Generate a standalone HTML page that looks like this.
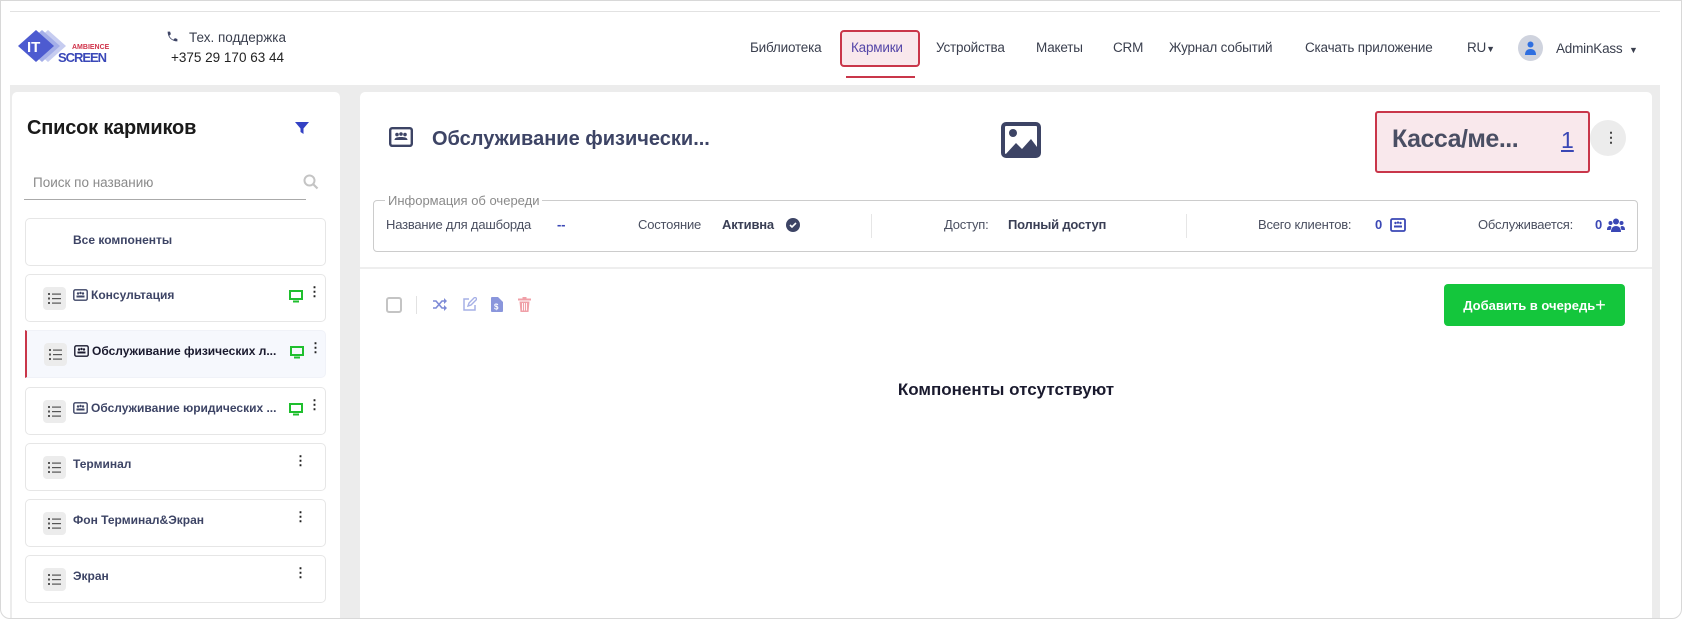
<!DOCTYPE html>
<html><head><meta charset="utf-8">
<style>
*{box-sizing:border-box;margin:0;padding:0}
body{width:1682px;height:619px;overflow:hidden;background:#fff;font-family:"Liberation Sans","Noto Sans CJK SC",sans-serif;position:relative;color:#3d4465}
.a{position:absolute}
.frame{left:0;top:0;width:1682px;height:619px;border:1px solid #d8d8d8;border-radius:0 0 10px 10px}
.nav{font-size:13.5px;color:#3a3f4e;top:40px;white-space:nowrap;letter-spacing:-.2px}
.item{left:25px;width:301px;height:48px;border:1px solid #e6e6e6;border-radius:5px;background:#fff}
.li{left:17px;top:12px;width:23px;height:23px;background:#ececec;border-radius:4px}
.it{top:13px;font-size:12px;font-weight:bold;color:#3d4465;white-space:nowrap}
.dots{font-size:13px;font-weight:bold;color:#222;top:10px;line-height:1}
.lbl{font-size:13px;color:#4a4f60;top:217px;white-space:nowrap;letter-spacing:-.2px}
.bold{font-weight:bold;color:#3a3f55}
</style></head><body>
<div class="a" style="left:10px;top:11px;width:1650px;height:1px;background:#e2e2e2"></div>
<div class="a" style="left:10px;top:85px;width:1650px;height:534px;background:#ececec"></div>
<svg class="a" style="left:18px;top:28px" width="100" height="40" viewBox="0 0 100 40">
<polygon points="30,2 48,18 30,34 12,18" fill="#c6ccf0"/>
<polygon points="24,2 42,18 24,34 6,18" fill="#a4aee8"/>
<polygon points="18,2 36,18 18,34 0,18" fill="#4d5bd0"/>
<text x="9" y="24" font-family="Liberation Sans" font-weight="bold" font-size="15" fill="#fff">IT</text>
<text x="54" y="21" font-family="Liberation Sans" font-weight="bold" font-size="7" fill="#d0334a">AMBIENCE</text>
<text x="40" y="34" font-family="Liberation Sans" font-weight="bold" font-size="13" fill="#3a48b8" textLength="49">SCREEN</text>
</svg>
<svg class="a" style="left:166px;top:30px" width="13" height="13" viewBox="0 0 16 16"><path d="M14 11l-3-1-2 2c-2-1-4-3-5-5l2-2-1-3H2C2 9 7 14 14 14z" fill="#3d4465"/></svg>
<div class="a" style="left:189px;top:30px;font-size:13.5px;color:#3a3f4e">Тех. поддержка</div>
<div class="a" style="left:171px;top:50px;font-size:13.5px;color:#222">+375 29 170 63 44</div>
<div class="a nav" style="left:750px">Библиотека</div>
<div class="a" style="left:840px;top:30px;width:80px;height:37px;border:2px solid #c9364a;border-radius:4px;background:#f9e8ec"></div>
<div class="a nav" style="left:851px;color:#5546a8">Кармики</div>
<div class="a" style="left:846px;top:76px;width:69px;height:2px;background:#c9364a"></div>
<div class="a nav" style="left:936px">Устройства</div>
<div class="a nav" style="left:1036px">Макеты</div>
<div class="a nav" style="left:1113px">CRM</div>
<div class="a nav" style="left:1169px">Журнал событий</div>
<div class="a nav" style="left:1305px">Скачать приложение</div>
<div class="a nav" style="left:1467px">RU<span style="font-size:9px">▼</span></div>
<div class="a" style="left:1518px;top:35px;width:25px;height:26px;border-radius:50%;background:#cfd3de"></div>
<svg class="a" style="left:1524px;top:40px" width="13" height="16" viewBox="0 0 13 16"><circle cx="6.5" cy="4.5" r="3" fill="#2f6fe0"/><path d="M1 15c0-4 2-6 5.5-6s5.5 2 5.5 6z" fill="#2f6fe0"/></svg>
<div class="a nav" style="left:1556px;top:41px">AdminKass <span style="font-size:9px;margin-left:3px">▼</span></div>

<div class="a" style="left:12px;top:92px;width:328px;height:527px;background:#fff;border-radius:5px 5px 0 0"></div>
<div class="a" style="left:27px;top:117px;font-size:20px;font-weight:bold;color:#1a1a1a;letter-spacing:-.2px">Список кармиков</div>
<svg class="a" style="left:295px;top:121px" width="14" height="14" viewBox="0 0 14 14"><path d="M0 1h14L8.5 7.5V13L5.5 11V7.5z" fill="#3341c4"/></svg>
<div class="a" style="left:33px;top:175px;font-size:13.5px;color:#8a8a8a">Поиск по названию</div>
<svg class="a" style="left:303px;top:174px" width="16" height="16" viewBox="0 0 16 16"><circle cx="6.5" cy="6.5" r="5" fill="none" stroke="#c4c4c4" stroke-width="2"/><path d="M10.5 10.5l4 4" stroke="#c4c4c4" stroke-width="2.2"/></svg>
<div class="a" style="left:24px;top:199px;width:282px;height:1px;background:#aaa"></div>

<div class="a item" style="top:218px"><div class="a it" style="left:47px;top:14px">Все компоненты</div></div>

<div class="a item" style="top:274px">
<div class="a li"></div><svg class="a" style="left:22px;top:18px" width="13" height="11" viewBox="0 0 13 11"><g fill="#555"><rect x="0" y="0" width="2" height="2"/><rect x="4" y="0.5" width="9" height="1.2"/><rect x="0" y="4.5" width="2" height="2"/><rect x="4" y="5" width="9" height="1.2"/><rect x="0" y="9" width="2" height="2"/><rect x="4" y="9.5" width="9" height="1.2"/></g></svg>
<svg class="a" style="left:47px;top:14px" width="15" height="12" viewBox="0 0 15 12"><rect x=".8" y=".8" width="13.4" height="10.4" rx="1.5" fill="none" stroke="#3d4465" stroke-width="1.4"/><circle cx="5" cy="4.5" r="1.2" fill="#3d4465"/><circle cx="7.5" cy="4" r="1.2" fill="#3d4465"/><circle cx="10" cy="4.5" r="1.2" fill="#3d4465"/><rect x="3.5" y="6.5" width="8" height="2" fill="#3d4465"/></svg>
<div class="a it" style="left:65px">Консультация</div>
<svg class="a" style="left:263px;top:15px" width="14" height="13" viewBox="0 0 14 13"><rect x="1" y="1" width="12" height="8" fill="none" stroke="#1fbf2e" stroke-width="2"/><rect x="4" y="10.5" width="6" height="2" fill="#1fbf2e"/></svg>
<div class="a dots" style="left:282px">⋮</div></div>

<div class="a item" style="top:330px;background:#f6f8fd;border-color:#f0f2f8;border-left:2px solid #c9364a;border-radius:0 5px 5px 0">
<div class="a li" style="left:17px"></div><svg class="a" style="left:22px;top:18px" width="13" height="11" viewBox="0 0 13 11"><g fill="#555"><rect x="0" y="0" width="2" height="2"/><rect x="4" y="0.5" width="9" height="1.2"/><rect x="0" y="4.5" width="2" height="2"/><rect x="4" y="5" width="9" height="1.2"/><rect x="0" y="9" width="2" height="2"/><rect x="4" y="9.5" width="9" height="1.2"/></g></svg>
<svg class="a" style="left:47px;top:14px" width="15" height="12" viewBox="0 0 15 12"><rect x=".8" y=".8" width="13.4" height="10.4" rx="1.5" fill="none" stroke="#1a1a2e" stroke-width="1.4"/><circle cx="5" cy="4.5" r="1.2" fill="#1a1a2e"/><circle cx="7.5" cy="4" r="1.2" fill="#1a1a2e"/><circle cx="10" cy="4.5" r="1.2" fill="#1a1a2e"/><rect x="3.5" y="6.5" width="8" height="2" fill="#1a1a2e"/></svg>
<div class="a it" style="left:65px;color:#1a1a2e">Обслуживание физических л...</div>
<svg class="a" style="left:263px;top:15px" width="14" height="13" viewBox="0 0 14 13"><rect x="1" y="1" width="12" height="8" fill="none" stroke="#1fbf2e" stroke-width="2"/><rect x="4" y="10.5" width="6" height="2" fill="#1fbf2e"/></svg>
<div class="a dots" style="left:282px">⋮</div></div>

<div class="a item" style="top:387px">
<div class="a li"></div><svg class="a" style="left:22px;top:18px" width="13" height="11" viewBox="0 0 13 11"><g fill="#555"><rect x="0" y="0" width="2" height="2"/><rect x="4" y="0.5" width="9" height="1.2"/><rect x="0" y="4.5" width="2" height="2"/><rect x="4" y="5" width="9" height="1.2"/><rect x="0" y="9" width="2" height="2"/><rect x="4" y="9.5" width="9" height="1.2"/></g></svg>
<svg class="a" style="left:47px;top:14px" width="15" height="12" viewBox="0 0 15 12"><rect x=".8" y=".8" width="13.4" height="10.4" rx="1.5" fill="none" stroke="#3d4465" stroke-width="1.4"/><circle cx="5" cy="4.5" r="1.2" fill="#3d4465"/><circle cx="7.5" cy="4" r="1.2" fill="#3d4465"/><circle cx="10" cy="4.5" r="1.2" fill="#3d4465"/><rect x="3.5" y="6.5" width="8" height="2" fill="#3d4465"/></svg>
<div class="a it" style="left:65px">Обслуживание юридических ...</div>
<svg class="a" style="left:263px;top:15px" width="14" height="13" viewBox="0 0 14 13"><rect x="1" y="1" width="12" height="8" fill="none" stroke="#1fbf2e" stroke-width="2"/><rect x="4" y="10.5" width="6" height="2" fill="#1fbf2e"/></svg>
<div class="a dots" style="left:282px">⋮</div></div>

<div class="a item" style="top:443px">
<div class="a li"></div><svg class="a" style="left:22px;top:18px" width="13" height="11" viewBox="0 0 13 11"><g fill="#555"><rect x="0" y="0" width="2" height="2"/><rect x="4" y="0.5" width="9" height="1.2"/><rect x="0" y="4.5" width="2" height="2"/><rect x="4" y="5" width="9" height="1.2"/><rect x="0" y="9" width="2" height="2"/><rect x="4" y="9.5" width="9" height="1.2"/></g></svg>
<div class="a it" style="left:47px">Терминал</div><div class="a dots" style="left:268px">⋮</div></div>

<div class="a item" style="top:499px">
<div class="a li"></div><svg class="a" style="left:22px;top:18px" width="13" height="11" viewBox="0 0 13 11"><g fill="#555"><rect x="0" y="0" width="2" height="2"/><rect x="4" y="0.5" width="9" height="1.2"/><rect x="0" y="4.5" width="2" height="2"/><rect x="4" y="5" width="9" height="1.2"/><rect x="0" y="9" width="2" height="2"/><rect x="4" y="9.5" width="9" height="1.2"/></g></svg>
<div class="a it" style="left:47px">Фон Терминал&amp;Экран</div><div class="a dots" style="left:268px">⋮</div></div>

<div class="a item" style="top:555px">
<div class="a li"></div><svg class="a" style="left:22px;top:18px" width="13" height="11" viewBox="0 0 13 11"><g fill="#555"><rect x="0" y="0" width="2" height="2"/><rect x="4" y="0.5" width="9" height="1.2"/><rect x="0" y="4.5" width="2" height="2"/><rect x="4" y="5" width="9" height="1.2"/><rect x="0" y="9" width="2" height="2"/><rect x="4" y="9.5" width="9" height="1.2"/></g></svg>
<div class="a it" style="left:47px">Экран</div><div class="a dots" style="left:268px">⋮</div></div>

<div class="a" style="left:360px;top:92px;width:1292px;height:527px;background:#fff;border-radius:5px 5px 0 0"></div>
<svg class="a" style="left:389px;top:127px" width="24" height="20" viewBox="0 0 24 20"><rect x="1.2" y="1.2" width="21.6" height="17.6" rx="2" fill="none" stroke="#3d4465" stroke-width="2.4"/><circle cx="8" cy="7.5" r="1.8" fill="#3d4465"/><circle cx="12" cy="7" r="1.8" fill="#3d4465"/><circle cx="16" cy="7.5" r="1.8" fill="#3d4465"/><path d="M5.5 13c0-2 2-3 6.5-3s6.5 1 6.5 3z" fill="#3d4465"/></svg>
<div class="a" style="left:432px;top:128px;font-size:20px;font-weight:bold;color:#3d4465">Обслуживание физически...</div>
<svg class="a" style="left:1001px;top:122px" width="40" height="36" viewBox="0 0 40 36"><rect x="2" y="2" width="36" height="32" rx="3" fill="none" stroke="#3d4465" stroke-width="4"/><circle cx="12" cy="11" r="4" fill="#3d4465"/><path d="M3 34l12-13 6 6 9-10 9 12v5z" fill="#3d4465"/></svg>
<div class="a" style="left:1375px;top:111px;width:215px;height:62px;border:2px solid #c9364a;border-radius:3px;background:#f9e8ec"></div>
<div class="a" style="left:1392px;top:125px;font-size:25px;font-weight:bold;color:#4a4e63;letter-spacing:-.5px">Касса/ме...</div>
<div class="a" style="left:1561px;top:127px;font-size:23px;color:#3a47b5;text-decoration:underline">1</div>
<div class="a" style="left:1590px;top:120px;width:36px;height:36px;border-radius:50%;background:#ececec"></div>
<div class="a" style="left:1604px;top:129px;font-size:14px;font-weight:bold;color:#444">⋮</div>

<div class="a" style="left:373px;top:200px;width:1265px;height:52px;border:1px solid #ccc;border-radius:4px"></div>
<div class="a" style="left:385px;top:193px;background:#fff;padding:0 3px;font-size:13px;color:#8a8a8a">Информация об очереди</div>
<div class="a lbl" style="left:386px">Название для дашборда</div>
<div class="a lbl bold" style="left:557px;color:#3a47b5">--</div>
<div class="a lbl" style="left:638px">Состояние</div>
<div class="a lbl bold" style="left:722px">Активна</div>
<svg class="a" style="left:786px;top:218px" width="14" height="14" viewBox="0 0 14 14"><circle cx="7" cy="7" r="7" fill="#3d4465"/><path d="M4 7l2 2 4-4" fill="none" stroke="#fff" stroke-width="1.6"/></svg>
<div class="a" style="left:871px;top:214px;width:1px;height:24px;background:#e6e6e6"></div>
<div class="a lbl" style="left:944px">Доступ:</div>
<div class="a lbl bold" style="left:1008px">Полный доступ</div>
<div class="a" style="left:1186px;top:214px;width:1px;height:24px;background:#e6e6e6"></div>
<div class="a lbl" style="left:1258px">Всего клиентов:</div>
<div class="a lbl bold" style="left:1375px;color:#3a47b5">0</div>
<svg class="a" style="left:1390px;top:218px" width="16" height="14" viewBox="0 0 16 14"><rect x="1" y="1" width="14" height="12" rx="1.5" fill="none" stroke="#3a47b5" stroke-width="1.8"/><circle cx="5.5" cy="5" r="1.2" fill="#3a47b5"/><circle cx="8" cy="4.6" r="1.2" fill="#3a47b5"/><circle cx="10.5" cy="5" r="1.2" fill="#3a47b5"/><rect x="4" y="7.5" width="8" height="2" fill="#3a47b5"/></svg>
<div class="a lbl" style="left:1478px">Обслуживается:</div>
<div class="a lbl bold" style="left:1595px;color:#3a47b5">0</div>
<svg class="a" style="left:1607px;top:218px" width="18" height="14" viewBox="0 0 18 14"><circle cx="9" cy="3.5" r="3" fill="#3a47b5"/><circle cx="3.5" cy="5" r="2" fill="#3a47b5"/><circle cx="14.5" cy="5" r="2" fill="#3a47b5"/><path d="M4 14c0-4 2-6 5-6s5 2 5 6z M0 12c0-3 1-4 3.5-4l1 1-1 3z M18 12c0-3-1-4-3.5-4l-1 1 1 3z" fill="#3a47b5"/></svg>
<div class="a" style="left:360px;top:267px;width:1292px;height:2px;background:#eee"></div>

<div class="a" style="left:386px;top:297px;width:16px;height:16px;border:2px solid #c4c4c4;border-radius:3px"></div>
<div class="a" style="left:416px;top:296px;width:1px;height:18px;background:#e2e2e2"></div>
<svg class="a" style="left:433px;top:298px" width="14" height="13" viewBox="0 0 14 13"><path d="M0 3h3l6 7h3M0 10h3l6-7h3" fill="none" stroke="#7d8ad6" stroke-width="1.6"/><path d="M11 0l3 3-3 3zM11 7l3 3-3 3z" fill="#7d8ad6"/></svg>
<svg class="a" style="left:462px;top:297px" width="15" height="15" viewBox="0 0 15 15"><path d="M7 2H2v11h11V8" fill="none" stroke="#a6b0e6" stroke-width="1.5"/><path d="M6 9l1-3 6-6 2 2-6 6z" fill="none" stroke="#a6b0e6" stroke-width="1.4"/></svg>
<svg class="a" style="left:491px;top:297px" width="12" height="15" viewBox="0 0 12 15"><path d="M0 1q0-1 1-1h6l5 5v9q0 1-1 1H1q-1 0-1-1z" fill="#8a96dc"/><text x="3" y="12.5" font-size="8" font-family="Liberation Sans" font-weight="bold" fill="#fff">$</text></svg>
<svg class="a" style="left:518px;top:297px" width="13" height="15" viewBox="0 0 13 15"><rect x="0" y="1.5" width="13" height="2" fill="#f0a0a8"/><rect x="4.5" y="0" width="4" height="2" fill="#f0a0a8"/><path d="M1.5 4.5h10l-1 10.5h-8z" fill="#f0a0a8"/><path d="M4.5 6v7.5M6.5 6v7.5M8.5 6v7.5" stroke="#fff" stroke-width=".9"/></svg>
<div class="a" style="left:1444px;top:284px;width:181px;height:42px;background:#14c63c;border-radius:4px;color:#fff;font-size:13px;font-weight:bold;line-height:42px;text-align:center">Добавить в очередь<span style="font-size:18px;font-weight:normal;vertical-align:-1px">+</span></div>

<div class="a" style="left:360px;width:1292px;top:380px;text-align:center;font-size:17px;font-weight:bold;color:#1a1a2e">Компоненты отсутствуют</div>

<div class="a frame"></div>
</body></html>
